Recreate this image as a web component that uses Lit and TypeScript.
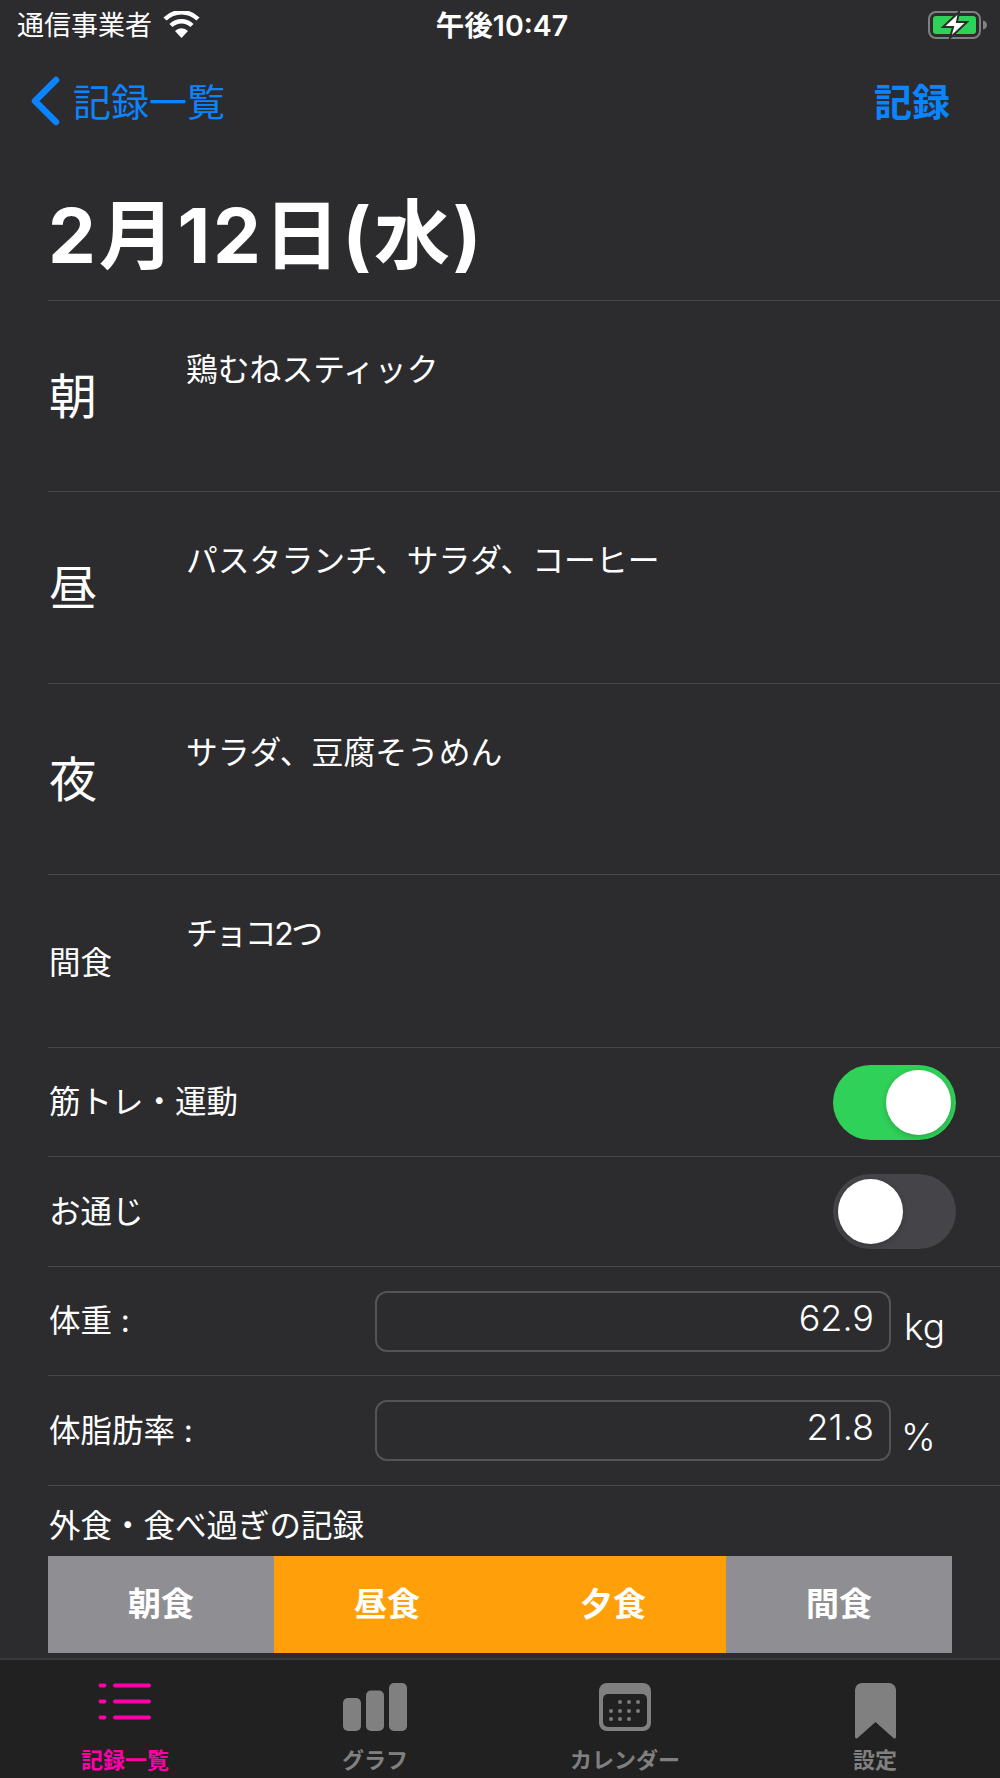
import { LitElement, html, svg, css } from 'lit';
import { customElement } from 'lit/decorators.js';

const meals = [
  { label: '朝', text: '鶏むねスティック' },
  { label: '昼', text: 'パスタランチ、サラダ、コーヒー' },
  { label: '夜', text: 'サラダ、豆腐そうめん' },
];

const eatOut = [
  { label: '朝食', on: false },
  { label: '昼食', on: true },
  { label: '夕食', on: true },
  { label: '間食', on: false },
];

const listIcon = html`<svg width="54" height="38" viewBox="0 0 54 38">
  <path d="M2.500 2.500h4M17 2.500h34M2.500 18.500h4M17 18.500h34M2.500 34.500h4M17 34.500h34" stroke="#ff00aa" stroke-width="4" stroke-linecap="round" />
</svg>`;

const barsIcon = html`<svg width="64" height="48" viewBox="0 0 64 48" fill="#808080">
  <rect x="0" y="15" width="18" height="33" rx="5" />
  <rect x="23" y="7.500" width="18" height="40.500" rx="5" />
  <rect x="46" y="0" width="18" height="48" rx="5" />
</svg>`;

const calendarDots = [
  [21, 19], [30, 19], [39, 19],
  [12, 28], [21, 28], [30, 28], [39, 28],
  [12, 36], [21, 36], [30, 36],
];

const calendarIcon = html`<svg width="52" height="48" viewBox="0 0 52 48">
  <rect x="0" y="0" width="52" height="48" rx="8" fill="#808080" />
  <rect x="4" y="11" width="44" height="33" rx="5" fill="#212121" />
  ${calendarDots.map(([x, y]) => svg`<rect x=${x - 1.750} y=${y - 1.750} width="3.500" height="3.500" rx="0.800" fill="#808080" />`)}
</svg>`;

const bookmarkIcon = html`<svg width="41" height="56" viewBox="0 0 41 56">
  <path d="M7 0h27a7 7 0 0 1 7 7v47a1.500 1.500 0 0 1-2.600 1L20.500 39 2.600 55A1.500 1.500 0 0 1 0 54V7a7 7 0 0 1 7-7z" fill="#808080" />
</svg>`;

const wifiIcon = html`<svg class="wifi" width="37" height="27" viewBox="0 0 37 27">
  <path d="M18.500 27l-6.500-7a9 9 0 0 1 13 0z" fill="#fff" />
  <path d="M8 14.500a15 15 0 0 1 21 0M2 8a23.500 23.500 0 0 1 33 0" fill="none" stroke="#fff" stroke-width="4.500" />
</svg>`;

const batteryIcon = html`<svg width="59" height="28" viewBox="0 0 59 28">
  <rect x="1" y="1" width="51" height="26" rx="7" fill="none" stroke="#808080" stroke-width="2" />
  <rect x="5" y="5" width="43" height="18" rx="3" fill="#30d158" />
  <path d="M55 9.500c2.500 .5 4 2.200 4 4.500s-1.500 4-4 4.500z" fill="#808080" />
  <path d="M31 1L15 16h10L22 27 39 11H29z" fill="#fff" stroke="#2c2c2e" stroke-width="2" />
</svg>`;

@customElement('app-root')
export class AppRoot extends LitElement {
  static styles = css`
    :host {
      display: flex;
      flex-direction: column;
      width: 1000px;
      height: 1778px;
      overflow: hidden;
      background: #2c2c2e;
      color: #fff;
      font-family: Inter, "Noto Sans CJK JP", sans-serif;
    }
    .status {
      display: grid;
      grid-template-columns: 1fr auto 1fr;
      align-items: center;
      height: 50px;
      padding: 0 13px 0 17px;
      font-size: 27px;
    }
    .carrier { display: flex; align-items: center; gap: 11px; }
    .carrier span { padding-bottom: 4px; }
    .wifi { margin-top: -2px; }
    .time { padding-bottom: 4px; font-weight: 600; font-size: 28.500px; }
    .battery { display: flex; justify-content: flex-end; }
    .nav {
      display: flex;
      align-items: center;
      justify-content: space-between;
      height: 102px;
      padding: 0 50px 0 31px;
      color: #0a84ff;
      font-size: 38px;
    }
    .back { display: flex; align-items: center; gap: 13px; }
    .nav span { padding-bottom: 4px; }
    .save { font-weight: 700; }
    .title {
      height: 148px;
      box-sizing: border-box;
      padding: 43px 0 0 48px;
      font-size: 76px;
      line-height: 80px;
      font-weight: 700;
      letter-spacing: 2.800px;
    }
    .content { flex: 1; overflow: hidden; padding-left: 48px; }
    .row {
      display: flex;
      box-sizing: border-box;
      border-top: 1px solid #48484a;
      font-size: 31.500px;
    }
    .food { font-size: 31.800px; line-height: 40px; }
    .meal { height: 191.333px; }
    .meal .name {
      width: 138px;
      padding: 66px 0 0 1px;
      font-size: 48px;
      line-height: 60px;
      box-sizing: border-box;
    }
    .meal .food { padding-top: 49px; }
    .snack { height: 173px; }
    .snack .name { width: 138px; box-sizing: border-box; padding: 68px 0 0 1px; line-height: 40px; }
    .snack .food { padding-top: 39px; }
    .narrow { letter-spacing: -2.400px; }
    .line {
      height: 109.500px;
      align-items: center;
      justify-content: space-between;
      padding-right: 44px;
    }
    .label { padding: 0 0 6px 1px; }
    .switch {
      display: flex;
      align-items: center;
      box-sizing: border-box;
      width: 123px;
      height: 75px;
      padding: 0 5px;
      border-radius: 38px;
      background: #454549;
    }
    .switch.on { justify-content: flex-end; background: #30d158; }
    .knob {
      width: 65px;
      height: 65px;
      border-radius: 50%;
      background: #fff;
      box-shadow: 0 2px 6px rgba(0, 0, 0, .2);
    }
    .measure {
      display: grid;
      grid-template-columns: 327px 516px auto;
      align-items: center;
      height: 109.500px;
    }
    .input {
      box-sizing: border-box;
      height: 61px;
      padding: 0 15px 6px 0;
      border: 2px solid #545458;
      border-radius: 12px;
      text-align: right;
      line-height: 50px;
      font-size: 36px;
      font-weight: 300;
    }
    .unit { padding: 12px 0 0 13px; font-size: 37px; font-weight: 300; line-height: 44px; }
    .unit.pct { padding-left: 10px; }
    .eat-out {
      border-top: 1px solid #48484a;
      padding-top: 15px;
      font-size: 31.500px;
      line-height: 50px;
    }
    .eat-out-title { padding-left: 1px; }
    .choices {
      display: grid;
      grid-template-columns: repeat(4, 1fr);
      width: 904px;
      height: 97px;
      margin-top: 5px;
    }
    .choice {
      display: flex;
      align-items: center;
      justify-content: center;
      background: #8e8e93;
      font-size: 33px;
      font-weight: 700;
    }
    .choice.on { background: #ff9f0a; }
    .tabs {
      display: grid;
      grid-template-columns: repeat(4, 1fr);
      height: 120px;
      box-sizing: border-box;
      border-top: 2px solid #3a3a3c;
      background: #212121;
      color: #808080;
      font-size: 22px;
      font-weight: 700;
    }
    .tab { display: flex; flex-direction: column; align-items: center; padding-top: 23px; }
    .tab.active { color: #ff00aa; }
    .tab-icon { height: 62px; }
    .tab-label { line-height: 30px; }
  `;

  render() {
    return html`
      <div class="status">
        <div class="carrier"><span>通信事業者</span> ${wifiIcon}</div>
        <div class="time">午後10:47</div>
        <div class="battery">${batteryIcon}</div>
      </div>
      <div class="nav">
        <div class="back">
          <svg width="29" height="50" viewBox="0 0 29 50">
            <path d="M25 4L4 25l21 21" fill="none" stroke="#0a84ff" stroke-width="6.500" stroke-linecap="round" stroke-linejoin="round" />
          </svg>
          <span>記録一覧</span>
        </div>
        <span class="save">記録</span>
      </div>
      <div class="title">2月12日(水)</div>
      <div class="content">
        ${meals.map((m) => html`
          <div class="row meal">
            <div class="name">${m.label}</div>
            <div class="food">${m.text}</div>
          </div>
        `)}
        <div class="row snack">
          <div class="name">間食</div>
          <div class="food narrow">チョコ2つ</div>
        </div>
        <div class="row line">
          <span class="label">筋トレ・運動</span>
          <div class="switch on"><div class="knob"></div></div>
        </div>
        <div class="row line">
          <span class="label">お通じ</span>
          <div class="switch"><div class="knob"></div></div>
        </div>
        <div class="row measure">
          <span class="label">体重 :</span>
          <div class="input">62.9</div>
          <span class="unit">kg</span>
        </div>
        <div class="row measure">
          <span class="label">体脂肪率 :</span>
          <div class="input">21.8</div>
          <span class="unit pct">%</span>
        </div>
        <div class="eat-out">
          <div class="eat-out-title">外食・食べ過ぎの記録</div>
          <div class="choices">
            ${eatOut.map((c) => html`<div class="choice ${c.on ? 'on' : ''}">${c.label}</div>`)}
          </div>
        </div>
      </div>
      <div class="tabs">
        <div class="tab active"><div class="tab-icon">${listIcon}</div><div class="tab-label">記録一覧</div></div>
        <div class="tab"><div class="tab-icon">${barsIcon}</div><div class="tab-label">グラフ</div></div>
        <div class="tab"><div class="tab-icon">${calendarIcon}</div><div class="tab-label">カレンダー</div></div>
        <div class="tab"><div class="tab-icon">${bookmarkIcon}</div><div class="tab-label">設定</div></div>
      </div>
    `;
  }
}
